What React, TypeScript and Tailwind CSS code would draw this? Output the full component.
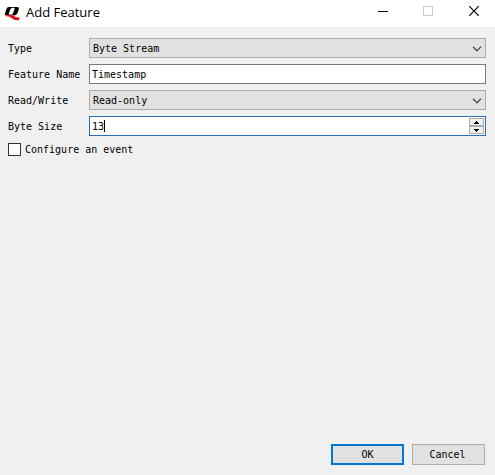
import React, { useState } from 'react';

interface FieldRowProps {
  id: string;
  label: string;
  children: React.ReactNode;
}

const FieldRow: React.FC<FieldRowProps> = ({ id, label, children }) => (
  <div className="flex h-5 items-center">
    <label htmlFor={id} className="w-[81px] shrink-0 whitespace-nowrap pt-[2px]">
      {label}
    </label>
    {children}
  </div>
);

interface SelectBoxProps {
  id: string;
  value: string;
  options: string[];
  onChange: (value: string) => void;
}

const SelectBox: React.FC<SelectBoxProps> = ({ id, value, options, onChange }) => (
  <div className="relative flex h-full min-w-0 flex-1">
    <select
      id={id}
      value={value}
      onChange={(e) => onChange(e.target.value)}
      className="h-full w-full appearance-none rounded-none border border-[#adadad] bg-[#e1e1e1] pl-[3px] pr-5 pt-[2px] outline-none"
    >
      {options.map((option) => (
        <option key={option}>{option}</option>
      ))}
    </select>
    <svg
      className="pointer-events-none absolute right-1 top-2 h-[6px] w-[10px]"
      viewBox="0 0 10 6"
      fill="none"
      stroke="#505050"
      strokeWidth="1.3"
    >
      <path d="M1 0.8 5 4.8 9 0.8" />
    </svg>
  </div>
);

const AppLogo: React.FC = () => (
  <svg className="h-4 w-4" viewBox="0 0 16 16" aria-hidden="true">
    <path
      fillRule="evenodd"
      fill="#000"
      d="M4.6 1H13Q15.4 1 14.8 3.2L13.2 7.6Q12.4 9.6 10 9.6H2.2Q.4 9.6 1 7.6L2.4 3.2Q3.2 1 4.6 1ZM8.4 1.8Q7 1.8 6.3 3.4L4.9 7.2Q4.3 8.8 5.6 8.8H7.2Q8.4 8.8 9 7.2L10.5 3.4Q11.1 1.8 9.8 1.8Z"
    />
    <path fill="#f0000c" d="M1.4 10.4Q5 7.8 8.8 9.5L12 11.2 15.8 11.6 14.8 14Q10.6 14.6 8.2 12.4 5.4 9.9 1.4 10.4Z" />
  </svg>
);

const TitleBar: React.FC = () => (
  <header className="flex h-[27px] items-center bg-white pl-1">
    <AppLogo />
    <h1 className="ml-[6px] flex-1 pb-1 font-['Open_Sans',sans-serif] text-[13px] leading-4">Add Feature</h1>
    <button type="button" aria-label="Minimize" className="flex h-6 w-10 items-center justify-center pb-1">
      <svg className="h-[10px] w-[10px]" viewBox="0 0 10 10" shapeRendering="crispEdges">
        <path d="M0 4.5H10" stroke="#000" />
      </svg>
    </button>
    <button type="button" aria-label="Maximize" disabled className="flex h-6 w-[50px] items-center justify-center pb-[6px]">
      <svg className="h-[10px] w-[10px]" viewBox="0 0 10 10" fill="none" shapeRendering="crispEdges">
        <path d="M.5 .5H9.5V9.5H.5Z" stroke="#ccc" />
      </svg>
    </button>
    <button type="button" aria-label="Close" className="flex h-6 w-[42px] items-center justify-center pb-[6px]">
      <svg className="h-[10px] w-[10px]" viewBox="0 0 10 10">
        <path d="M.2 .2 9.8 9.8M9.8 .2 .2 9.8" stroke="#000" strokeWidth="1.2" />
      </svg>
    </button>
  </header>
);

const App: React.FC = () => {
  const [type, setType] = useState('Byte Stream');
  const [name, setName] = useState('Timestamp');
  const [access, setAccess] = useState('Read-only');
  const [size, setSize] = useState('13');
  const [hasEvent, setHasEvent] = useState(false);

  const step = (amount: number) => setSize(String(Math.max(0, Number(size) + amount)));

  return (
    <div className="flex min-h-screen flex-col bg-[#f0f0f0] font-['DejaVu_Sans_Mono','Liberation_Mono',monospace] text-[10px] leading-3 text-black">
      <TitleBar />

      <form className="flex flex-1 flex-col pt-[11px]" onSubmit={(e) => e.preventDefault()}>
        <div className="flex flex-col gap-[6px] pl-2 pr-[9px]">
          <FieldRow id="type" label="Type">
            <SelectBox id="type" value={type} options={['Byte Stream', 'Integer', 'Boolean']} onChange={setType} />
          </FieldRow>
          <FieldRow id="name" label="Feature Name">
            <input
              id="name"
              type="text"
              value={name}
              onChange={(e) => setName(e.target.value)}
              className="h-full min-w-0 flex-1 border border-[#7a7a7a] bg-white px-[2px] outline-none"
            />
          </FieldRow>
          <FieldRow id="access" label="Read/Write">
            <SelectBox id="access" value={access} options={['Read-only', 'Write-only', 'Read/Write']} onChange={setAccess} />
          </FieldRow>
          <FieldRow id="size" label="Byte Size">
            <div className="relative flex h-full min-w-0 flex-1 border border-[#2a72b5] bg-white">
              <input
                id="size"
                type="text"
                inputMode="numeric"
                value={size}
                onChange={(e) => setSize(e.target.value)}
                className="min-w-0 flex-1 px-[2px] pt-[2px] caret-transparent outline-none"
              />
              {/* Text cursor after the value */}
              <span className="pointer-events-none absolute left-[14px] top-[3px] h-3 w-px bg-black" />
              <div className="flex w-4 flex-col p-px pl-0">
                <button
                  type="button"
                  aria-label="Increase"
                  onClick={() => step(1)}
                  className="flex flex-1 items-center justify-center border border-[#adadad] bg-[#f0f0f0]"
                >
                  <svg className="h-[3px] w-[5px]" viewBox="0 0 5 3" shapeRendering="crispEdges">
                    <path d="M2 0H3V1H4V2H5V3H0V2H1V1H2Z" />
                  </svg>
                </button>
                <button
                  type="button"
                  aria-label="Decrease"
                  onClick={() => step(-1)}
                  className="flex flex-1 items-center justify-center border border-[#adadad] bg-[#f0f0f0]"
                >
                  <svg className="h-[3px] w-[5px]" viewBox="0 0 5 3" shapeRendering="crispEdges">
                    <path d="M0 0H5V1H4V2H3V3H2V2H1V1H0Z" />
                  </svg>
                </button>
              </div>
            </div>
          </FieldRow>
          <label className="flex items-center gap-1">
            <input
              type="checkbox"
              checked={hasEvent}
              onChange={(e) => setHasEvent(e.target.checked)}
              className="h-[13px] w-[13px] appearance-none border border-[#333] bg-white checked:bg-[#0078d7]"
            />
            <span className="pt-[2px]">Configure an event</span>
          </label>
        </div>

        <div className="mt-auto flex justify-end gap-2 pb-[10px] pr-[10px]">
          <button type="submit" className="h-[21px] w-[73px] border-2 border-[#0078d7] bg-[#e1e1e1] pt-px">
            OK
          </button>
          <button type="button" className="h-[21px] w-[73px] border border-[#adadad] bg-[#e1e1e1] pr-[2px] pt-px">
            Cancel
          </button>
        </div>
      </form>
    </div>
  );
};

export default App;
